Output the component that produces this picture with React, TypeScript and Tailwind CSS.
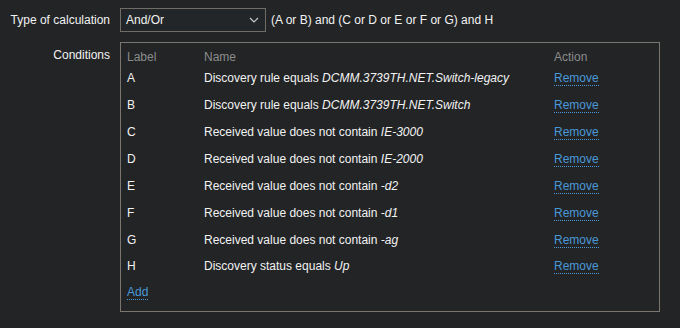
const conditions = [
  { label: 'A', text: 'Discovery rule equals ', value: 'DCMM.3739TH.NET.Switch-legacy' },
  { label: 'B', text: 'Discovery rule equals ', value: 'DCMM.3739TH.NET.Switch' },
  { label: 'C', text: 'Received value does not contain ', value: 'IE-3000' },
  { label: 'D', text: 'Received value does not contain ', value: 'IE-2000' },
  { label: 'E', text: 'Received value does not contain ', value: '-d2' },
  { label: 'F', text: 'Received value does not contain ', value: '-d1' },
  { label: 'G', text: 'Received value does not contain ', value: '-ag' },
  { label: 'H', text: 'Discovery status equals ', value: 'Up' },
];

function Link({ children }: { children: React.ReactNode }) {
  return (
    <span className="cursor-pointer border-b border-dotted border-[#4a98d8] leading-[14px] text-[#4a98d8]">
      {children}
    </span>
  );
}

export default function App() {
  return (
    <div
      className="h-[328px] w-[680px] bg-[#222426] text-[12px] text-[#f2f2f2]"
      style={{ fontFamily: '"Liberation Sans", Arial, sans-serif' }}
    >
      {/* Type of calculation */}
      <div className="flex items-center pt-[8px]">
        <div className="w-[110px] text-right">Type of calculation</div>
        <div className="ml-[10px] flex h-[24px] w-[146px] items-center justify-between border border-[#706c67] bg-[#232628] pl-[5px] pr-[6px]">
          <span>And/Or</span>
          <svg width="10" height="6" viewBox="0 0 10 6" fill="none">
            <path d="M1 1l4 4 4-4" stroke="#c8c8c8" strokeWidth="1.2" />
          </svg>
        </div>
        <div className="ml-[5px]">(A or B) and (C or D or E or F or G) and H</div>
      </div>

      {/* Conditions */}
      <div className="mt-[10px] flex">
        <div className="w-[110px] pt-[4px] text-right">Conditions</div>
        <div className="ml-[10px] w-[540px] border border-[#7a766f] pb-[5px] pl-[6px] pt-[5px]">
          <div className="grid h-[17px] grid-cols-[77px_350px_1fr] items-center text-[#8c8c8c]">
            <div>Label</div>
            <div>Name</div>
            <div>Action</div>
          </div>
          {conditions.map((c) => (
            <div key={c.label} className="grid h-[26.86px] grid-cols-[77px_350px_1fr] items-center">
              <div>{c.label}</div>
              <div>
                {c.text}
                <i>{c.value}</i>
              </div>
              <div>
                <Link>Remove</Link>
              </div>
            </div>
          ))}
          <div className="flex h-[26px] items-center">
            <Link>Add</Link>
          </div>
        </div>
      </div>
    </div>
  );
}
